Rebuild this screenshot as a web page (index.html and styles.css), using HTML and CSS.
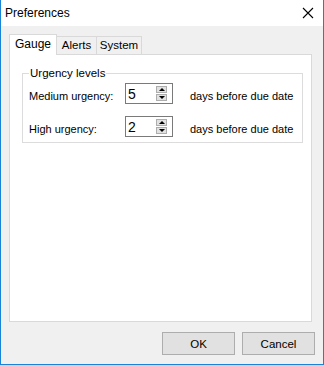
FILE: index.html
```html
<!DOCTYPE html>
<html lang="en">
<head>
    <meta charset="UTF-8">
    <title>Preferences</title>
    <link rel="stylesheet" href="styles.css">
</head>
<body>
<div class="window">
    <div class="titlebar">
        <span class="title">Preferences</span>
        <svg class="close" width="12" height="12" viewBox="0 0 12 12">
            <path d="M1 1 L11 11 M11 1 L1 11" stroke="#000" stroke-width="1.1" fill="none"/>
        </svg>
    </div>
    <div class="client">
        <div class="tabs">
            <span class="tab tab-gauge current">Gauge</span>
            <span class="tab tab-alerts">Alerts</span>
            <span class="tab tab-system">System</span>
        </div>
        <div class="panel">
            <fieldset class="group">
                <legend>Urgency levels</legend>
                <div class="row">
                    <label>Medium urgency:</label>
                    <div class="spin">
                        <span class="value">5</span>
                        <div class="arrows"><span class="up"></span><span class="down"></span></div>
                    </div>
                    <span class="hint">days before due date</span>
                </div>
                <div class="row">
                    <label>High urgency:</label>
                    <div class="spin">
                        <span class="value">2</span>
                        <div class="arrows"><span class="up"></span><span class="down"></span></div>
                    </div>
                    <span class="hint">days before due date</span>
                </div>
            </fieldset>
        </div>
        <div class="buttons">
            <button class="btn">OK</button>
            <button class="btn">Cancel</button>
        </div>
    </div>
</div>
</body>
</html>
```
FILE: styles.css
```css
* {
    margin: 0;
    padding: 0;
    box-sizing: border-box;
}

body {
    font-family: "Liberation Sans", Arial, sans-serif;
    font-size: 11px;
    color: #000;
}

.window {
    width: 324px;
    height: 365px;
    border: 1px solid #1883d7;
    border-top: 0;
    display: flex;
    flex-direction: column;
    background: #f0f0f0;
}

.titlebar {
    height: 26px;
    background: #fff;
    display: flex;
    align-items: center;
    justify-content: space-between;
    padding: 0 9px 1px 4px;
}

.title {
    font-size: 12px;
}

.client {
    flex: 1;
    padding: 8px 8px 0 8px;
    display: flex;
    flex-direction: column;
}

.tabs {
    display: flex;
    align-items: flex-end;
    height: 21px;
    margin-bottom: -1px;
}

.tab {
    height: 19px;
    border: 1px solid #d9d9d9;
    border-bottom: 0;
    background: #f0f0f0;
    text-align: center;
    line-height: 17px;
    font-size: 11.5px;
}

.tab + .tab {
    border-left: 0;
}

.tab.current {
    height: 21px;
    background: #fff;
    position: relative;
    z-index: 1;
    line-height: 19px;
    font-size: 12px;
}

.tab-gauge { width: 48px; }
.tab-alerts { width: 40px; }
.tab-system { width: 45px; }

.panel {
    width: 303px;
    height: 268px;
    background: #fff;
    border: 1px solid #d9d9d9;
    padding: 11px 8px 0 12px;
}

.group {
    border: 1px solid #dcdcdc;
    height: 77px;
    padding: 3px 0 0 6px;
}

.group legend {
    margin-left: 0;
    padding: 0 1px;
    line-height: 14px;
    font-size: 11.5px;
}

.row {
    display: flex;
    align-items: center;
    height: 21px;
    margin-bottom: 12px;
    white-space: nowrap;
}

.row label {
    width: 96px;
    padding-top: 5px;
}

.spin {
    width: 48px;
    height: 21px;
    border: 1px solid #7a7a7a;
    display: flex;
    align-items: center;
    justify-content: space-between;
    padding: 0 5px 0 2px;
}

.value {
    font-size: 14px;
}

.arrows {
    display: flex;
    flex-direction: column;
    gap: 1px;
}

.arrows span {
    width: 11px;
    height: 7px;
    background: #e1e1e1;
    border: 1px solid #adadad;
    display: flex;
    align-items: center;
    justify-content: center;
}

.arrows .up::after {
    content: "";
    border-left: 3px solid transparent;
    border-right: 3px solid transparent;
    border-bottom: 3px solid #000;
}

.arrows .down::after {
    content: "";
    border-left: 3px solid transparent;
    border-right: 3px solid transparent;
    border-top: 3px solid #000;
}

.hint {
    margin-left: 17px;
    padding-top: 5px;
}

.buttons {
    display: flex;
    justify-content: flex-end;
    gap: 7px;
    margin-top: 10px;
}

.btn {
    width: 73px;
    height: 23px;
    background: #e1e1e1;
    border: 1px solid #adadad;
    font-family: "Liberation Sans", Arial, sans-serif;
    font-size: 11.5px;
    color: #000;
}
```
